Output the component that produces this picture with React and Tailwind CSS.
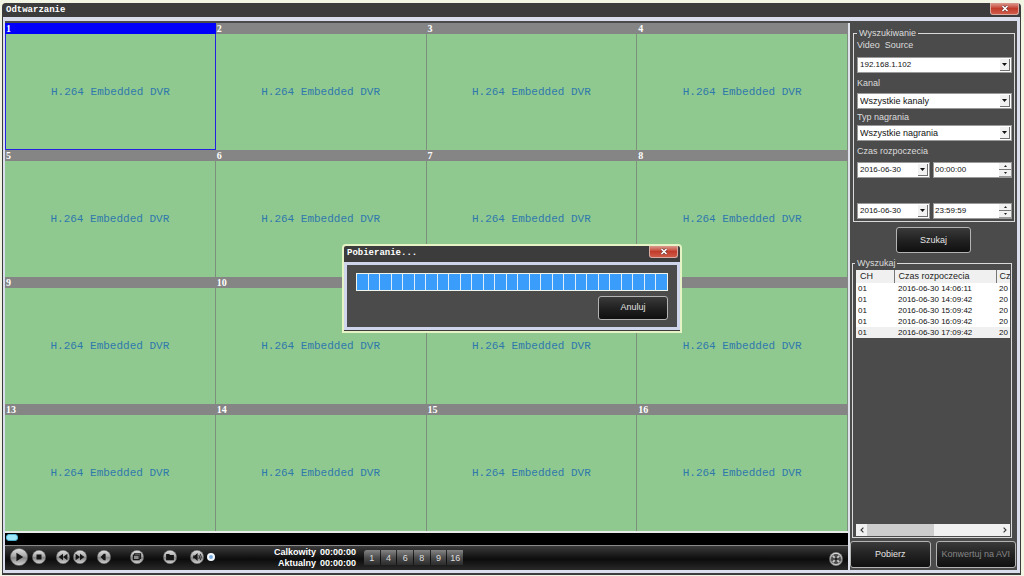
import React from "react";

const CHANNELS = Array.from({ length: 16 }, (_, i) => i + 1);
const RECORDS = ["14:06:11", "14:09:42", "15:09:42", "16:09:42", "17:09:42"];
const BLACK_BUTTON =
  "rounded-[3px] border border-[#b4b4b4] bg-linear-to-b from-[#3a3a3a] via-[#222222] via-50% to-[#101010] text-[9px] leading-none";

function CloseButton({ label }) {
  return (
    <button
      aria-label={label}
      className="flex h-3 w-[29px] items-center justify-center rounded-b-[3px] border border-t-0 border-[#d8aaa2] bg-linear-to-b from-[#d99a90] via-[#c23c2c] via-50% to-[#cf5a48]"
    >
      <svg width="8" height="7" viewBox="0 0 8 7">
        <path d="M1.5 1l5 5M6.5 1l-5 5" stroke="#6b3a36" strokeWidth="2.8" />
        <path d="M1.5 1l5 5M6.5 1l-5 5" stroke="#fff" strokeWidth="1.6" />
      </svg>
    </button>
  );
}

function Arrow() {
  return (
    <span className="pointer-events-none absolute top-[2px] right-[2px] bottom-[2px] flex w-[10px] items-center justify-center border-r border-b border-[#707070] bg-[#f1f1f1]">
      <svg width="5" height="3" viewBox="0 0 5 3">
        <path d="M0 0h5L2.5 3z" fill="#111" />
      </svg>
    </span>
  );
}

function Select({ label, value, className }) {
  return (
    <div className={"relative h-4 " + className}>
      <select
        aria-label={label}
        defaultValue={value}
        className="block h-4 w-full appearance-none rounded-none border border-[#9a9a9a] bg-white pl-[2px] leading-[14px] text-[#111]"
      >
        <option>{value}</option>
      </select>
      <Arrow />
    </div>
  );
}

function TimeRow({ name, date, time }) {
  return (
    <div className="flex gap-[3px]">
      <Select label={name + " data"} value={date} className="w-[73px] text-[8px]" />
      <div className="flex h-4 min-w-0 flex-1 border border-[#9a9a9a] bg-white">
        <input
          aria-label={name + " czas"}
          defaultValue={time}
          className="min-w-0 flex-1 pl-px text-[8px] leading-[14px] text-[#111]"
        />
        <div className="flex w-3 flex-col bg-[#f1f1f1]">
          <button aria-label="Zwiększ" className="flex flex-1 items-center justify-center border-b border-[#777]">
            <svg width="3" height="2" viewBox="0 0 3 2"><path d="M1.5 0L3 2H0z" fill="#222" /></svg>
          </button>
          <button aria-label="Zmniejsz" className="flex flex-1 items-center justify-center border-b border-[#999]">
            <svg width="3" height="2" viewBox="0 0 3 2"><path d="M0 0h3L1.5 2z" fill="#222" /></svg>
          </button>
        </div>
      </div>
    </div>
  );
}

function RoundButton({ label, className, children }) {
  return (
    <button aria-label={label} className={"shrink-0 rounded-full " + className}>
      <svg viewBox="0 0 14 14" className="block size-full">
        <circle cx="7" cy="7" r="6.7" fill="url(#metal)" stroke="#5e5e5e" strokeWidth=".5" />
        {children}
      </svg>
    </button>
  );
}

function Toolbar() {
  return (
    <div className="flex h-[25px] items-center border-t border-[#8a8a8a] bg-linear-to-b from-[#3c3c3c] via-[#0c0c0c] via-55% to-[#2a2a2a] pb-[2px] pl-[5px]">
      <svg width="0" height="0" className="absolute">
        <defs>
          <linearGradient id="metal" x1="0" y1="0" x2="0" y2="1">
            <stop offset="0" stopColor="#e2e2e2" />
            <stop offset=".45" stopColor="#a8a8a8" />
            <stop offset=".55" stopColor="#858585" />
            <stop offset="1" stopColor="#d6d6d6" />
          </linearGradient>
        </defs>
      </svg>
      <RoundButton label="Odtwórz" className="size-[18px]">
        <path d="M5 3.7L10.3 7 5 10.3z" fill="#151515" />
      </RoundButton>
      <RoundButton label="Stop" className="ml-1 size-[14px]">
        <path d="M4.5 4.5h5v5h-5z" fill="#151515" />
      </RoundButton>
      <RoundButton label="Wolniej" className="ml-[10px] size-[14px]">
        <path d="M7 3.8v6.4L2.6 7zM11.4 3.8v6.4L7 7z" fill="#151515" />
      </RoundButton>
      <RoundButton label="Szybciej" className="ml-[3px] size-[14px]">
        <path d="M2.6 3.8L7 7l-4.4 3.2zM7 3.8L11.4 7 7 10.2z" fill="#151515" />
      </RoundButton>
      <RoundButton label="Poprzednia klatka" className="ml-[10px] size-[14px]">
        <path d="M3.6 7l3.2-3.3v6.6zM6.6 3.7h2v6.6h-2z" fill="#151515" />
      </RoundButton>
      <RoundButton label="Zdjęcie" className="ml-[19px] size-[14px]">
        <path d="M4.6 5V3.7h6v4.8H9.4" fill="none" stroke="#181818" strokeWidth="1.1" />
        <path d="M3.4 5.2h5.8v4.4H3.4z" fill="#8a8a8a" stroke="#181818" strokeWidth="1.2" />
      </RoundButton>
      <RoundButton label="Otwórz folder" className="ml-[19px] size-[14px]">
        <path d="M3.1 4h3l1 1h3.8v5.2H3.1z" fill="#151515" />
      </RoundButton>
      <RoundButton label="Dźwięk" className="ml-[13px] size-[14px]">
        <path d="M3.2 5.6h1.7L7.6 3v8L4.9 8.4H3.2z" fill="#151515" />
        <path d="M8.8 5q1.5 2 0 4M10.2 3.8q2.2 3.2 0 6.4" fill="none" stroke="#222" strokeWidth=".9" />
      </RoundButton>
      <input
        type="range"
        aria-label="Głośność"
        defaultValue="0"
        className="ml-[3px] h-2 w-10 appearance-none bg-transparent [&::-webkit-slider-thumb]:size-2 [&::-webkit-slider-thumb]:appearance-none [&::-webkit-slider-thumb]:rounded-full [&::-webkit-slider-thumb]:border-2 [&::-webkit-slider-thumb]:border-[#f4f9ff] [&::-webkit-slider-thumb]:bg-[#7fb0e0]"
      />
      <div className="ml-[25px] grid grid-cols-[44px_38px] gap-x-[4px] pt-px text-[9px] leading-[11px] font-bold text-white">
        <span className="text-right">Calkowity</span>
        <span>00:00:00</span>
        <span className="text-right">Aktualny</span>
        <span>00:00:00</span>
      </div>
      <div className="ml-[6px] grid w-[99px] grid-cols-6 gap-px">
        {[1, 4, 6, 8, 9, 16].map((n) => (
          <button
            key={n}
            className="h-[15px] bg-linear-to-b from-[#858585] via-[#4d4d4d] via-50% to-[#2c2c2c] pt-[2px] text-[9px] leading-none text-[#dedede] first:rounded-tl-[3px]"
          >
            {n}
          </button>
        ))}
      </div>
      <RoundButton label="Pełny ekran" className="mt-[4px] mr-[5px] ml-auto size-[14px]">
        <circle cx="7" cy="7" r="5" fill="#4a4a4a" />
        <path d="M3.8 3.8l6.4 6.4M10.2 3.8l-6.4 6.4" stroke="#c9c9c9" strokeWidth="1.8" />
        <circle cx="7" cy="7" r="1.8" fill="#222" />
      </RoundButton>
    </div>
  );
}

function Player() {
  return (
    <main className="flex min-w-0 flex-1 flex-col">
      <div className="grid flex-1 grid-cols-4 grid-rows-4 bg-[#90c990]">
        {CHANNELS.map((n) => (
          <section
            key={n}
            className={
              "flex flex-col " +
              (n === 1 ? "border-x border-b border-x-[#2222e0] border-b-[#2222e0]" : "border-r border-r-[#7d8f7d]")
            }
          >
            <h2
              className={
                "-mr-px h-[11px] pl-px font-['Liberation_Serif',serif] text-[10px] leading-[11px] font-bold text-white " +
                (n === 1 ? "-ml-px bg-[#0000fb]" : "bg-[#858585]")
              }
            >
              {n}
            </h2>
            <p className="flex flex-1 items-center justify-center pt-px font-['Liberation_Mono',monospace] text-[11px] whitespace-nowrap text-[#2f78ac]">
              H.264 Embedded DVR
            </p>
          </section>
        ))}
      </div>
      <div className="flex h-[14px] items-center border-t-2 border-[#e6eae6] bg-black">
        <input
          type="range"
          aria-label="Pozycja"
          defaultValue="0"
          className="mb-[3px] ml-px h-[7px] w-full appearance-none bg-transparent [&::-webkit-slider-thumb]:h-[7px] [&::-webkit-slider-thumb]:w-3 [&::-webkit-slider-thumb]:appearance-none [&::-webkit-slider-thumb]:rounded-[3px] [&::-webkit-slider-thumb]:border [&::-webkit-slider-thumb]:border-[#4fb4d4] [&::-webkit-slider-thumb]:bg-[#9fe6f8]"
        />
      </div>
      <Toolbar />
    </main>
  );
}

function Sidebar() {
  return (
    <aside className="flex w-[169px] flex-col border-l-2 border-[#dfe2ea] bg-[#4b4b4b] pt-[5px] text-[9px] text-[#dcdcdc]">
      <fieldset className="mr-[2px] ml-[3px] min-w-0 border border-[#dadada] pt-0 pr-[2px] pb-[2px] pl-[3px]">
        <legend className="px-[2px] leading-[10px]">Wyszukiwanie</legend>
        <div className="h-[19px] leading-[15px]">Video&nbsp; Source</div>
        <Select label="Video Source" value="192.168.1.102" className="text-[8px]" />
        <div className="h-5 leading-[21px]">Kanal</div>
        <Select label="Kanal" value="Wszystkie kanaly" className="text-[9px]" />
        <div className="h-4 leading-4">Typ nagrania</div>
        <Select label="Typ nagrania" value="Wszystkie nagrania" className="text-[9px]" />
        <div className="h-[21px] leading-[21px]">Czas rozpoczecia</div>
        <TimeRow name="Początek" date="2016-06-30" time="00:00:00" />
        <div className="h-[25px]" />
        <TimeRow name="Koniec" date="2016-06-30" time="23:59:59" />
      </fieldset>
      <button className={"mt-[5px] h-[26px] w-[75px] self-center text-[#e4e4e4] " + BLACK_BUTTON}>Szukaj</button>
      <fieldset className="mt-[5px] mr-[5px] ml-[2px] flex min-w-0 flex-1 flex-col border border-[#dadada] pr-px pb-px pl-[3px]">
        <legend className="-ml-px px-[2px] leading-[10px]">Wyszukaj</legend>
        <div className="flex h-full flex-col">
          <div className="flex-1 overflow-hidden">
            <table className="mt-[2px] w-full table-fixed border-collapse bg-white text-[#222]">
              <thead className="bg-[#f0f0f0]">
                <tr className="h-[13px] text-left leading-[13px]">
                  <th className="w-[38px] border-r border-[#777] p-0 pl-1 font-normal">CH</th>
                  <th className="w-[102px] border-r border-[#777] p-0 pl-1 font-normal">Czas rozpoczecia</th>
                  <th className="p-0 pl-[3px] font-normal">Cz</th>
                </tr>
              </thead>
              <tbody className="text-[8px] leading-[11px] text-[#111]">
                {RECORDS.map((t) => (
                  <tr key={t} className="h-[11px] last:bg-[#f0f0f0]">
                    <td className="p-0 pl-[2px]">01</td>
                    <td className="p-0 pl-1">2016-06-30 {t}</td>
                    <td className="p-0 pl-[3px]">20</td>
                  </tr>
                ))}
              </tbody>
            </table>
          </div>
          <div className="flex h-3 bg-[#f1f1f1]">
            <button aria-label="Przewiń w lewo" className="flex w-[11px] items-center justify-center">
              <svg width="4" height="6" viewBox="0 0 4 6"><path d="M3.4.6L1 3l2.4 2.4" fill="none" stroke="#333" strokeWidth="1.1" /></svg>
            </button>
            <div className="w-[67px] bg-[#cdcdcd]" />
            <button aria-label="Przewiń w prawo" className="ml-auto flex w-[11px] items-center justify-center">
              <svg width="4" height="6" viewBox="0 0 4 6"><path d="M.6.6L3 3 .6 5.4" fill="none" stroke="#333" strokeWidth="1.1" /></svg>
            </button>
          </div>
        </div>
      </fieldset>
      <div className="mt-[3px] mr-px mb-[2px] flex h-[27px] gap-[5px]">
        <button className={"flex-1 text-[#e4e4e4] " + BLACK_BUTTON}>Pobierz</button>
        <button disabled className={"flex-1 whitespace-nowrap text-[#858585] " + BLACK_BUTTON}>
          Konwertuj na AVI
        </button>
      </div>
    </aside>
  );
}

function DownloadDialog() {
  return (
    <div className="fixed inset-0 flex items-center justify-center">
      <div
        role="dialog"
        aria-label="Pobieranie"
        className="w-[340px] rounded-t-[4px] border-2 border-[#e6f3c4] bg-[#3c3c3c] pb-px"
      >
        <div className="flex h-4 items-start justify-between pr-[2px] pl-[3px]">
          <h2 className="font-['Liberation_Mono',monospace] text-[9px] leading-[15px] font-bold text-white">
            Pobieranie...
          </h2>
          <CloseButton label="Zamknij okno" />
        </div>
        <div className="border-[3px] border-[#cfd6ec] bg-[#4b4b4b] px-[9px] pt-[8px] pb-[7px]">
          <div
            role="progressbar"
            aria-label="Postęp"
            aria-valuenow={100}
            className="flex h-[18px] gap-px border border-[#f2f6ea] bg-[#dcecf8]"
          >
            {Array.from({ length: 27 }, (_, i) => (
              <div key={i} className="flex-1 bg-[#3a9cfb]" />
            ))}
          </div>
          <button className={"mt-[5px] ml-auto block h-6 w-[70px] text-[#e4e4e4] " + BLACK_BUTTON}>Anuluj</button>
        </div>
      </div>
    </div>
  );
}

export default function App() {
  return (
    <div className="flex min-h-screen flex-col bg-[#f3f5e4] pt-[3px] pr-[3px] pb-px pl-[2px] font-['Liberation_Sans',sans-serif]">
      <div className="flex flex-1 flex-col rounded-t-[4px] bg-[#3c3c3c] px-px pb-[2px]">
        <header className="flex h-[14px] items-start justify-between pr-px pl-[3px]">
          <h1 className="font-['Liberation_Mono',monospace] text-[9px] leading-[15px] font-bold text-white">
            Odtwarzanie
          </h1>
          <CloseButton label="Zamknij" />
        </header>
        <div className="flex flex-1 border-t-4 border-r-3 border-b-3 border-l-2 border-[#d9ddec] bg-[#4b4b4b] pt-[2px]">
          <Player />
          <Sidebar />
        </div>
      </div>
      <DownloadDialog />
    </div>
  );
}
